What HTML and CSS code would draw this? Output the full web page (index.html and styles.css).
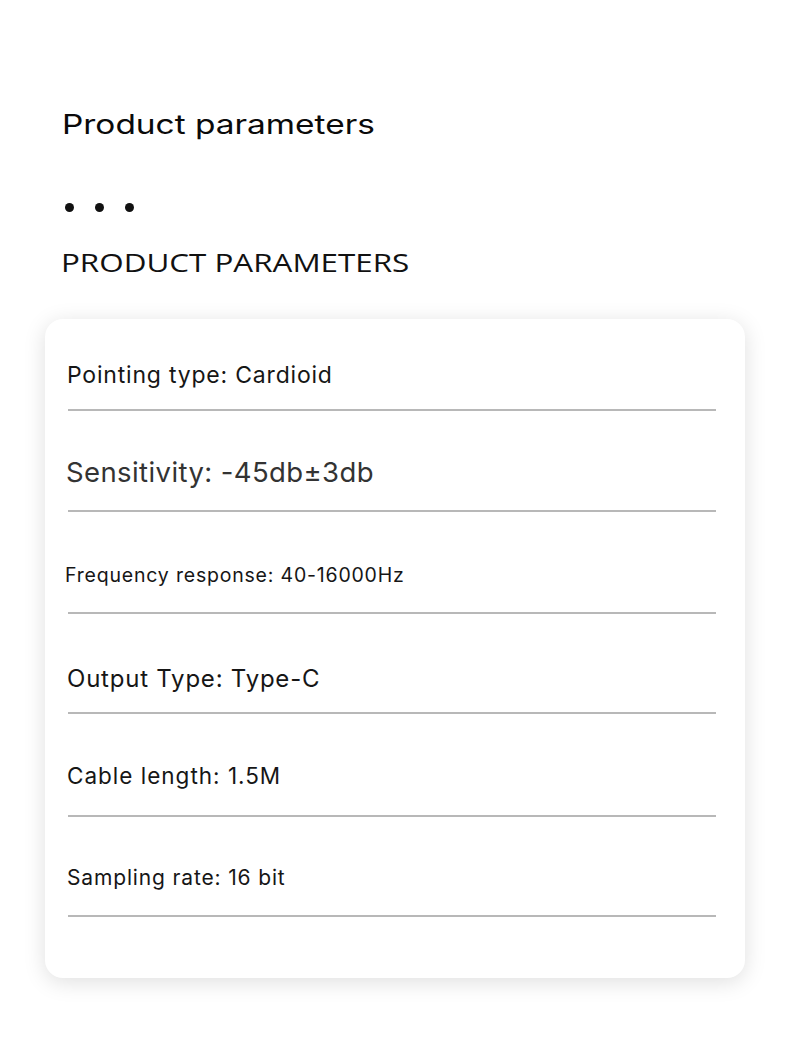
FILE: index.html
```html
<!DOCTYPE html>
<html>
<head>
<meta charset="utf-8">
<link rel="stylesheet" href="styles.css">
</head>
<body>
<div class="page">
  <h1 class="title"><span>Product parameters</span></h1>
  <div class="dots"><span></span><span></span><span></span></div>
  <h2 class="subtitle"><span>PRODUCT PARAMETERS</span></h2>
  <div class="card">
    <div class="row r1"><span>Pointing type: Cardioid</span></div>
    <div class="row r2"><span>Sensitivity: -45db±3db</span></div>
    <div class="row r3"><span>Frequency response: 40-16000Hz</span></div>
    <div class="row r4"><span>Output Type: Type-C</span></div>
    <div class="row r5"><span>Cable length: 1.5M</span></div>
    <div class="row r6"><span>Sampling rate: 16 bit</span></div>
  </div>
</div>
</body>
</html>
```

FILE: styles.css
```css
html, body {
  margin: 0;
  padding: 0;
  background: #ffffff;
}
body {
  font-family: "Inter", "Roboto", "Liberation Sans", sans-serif;
  color: #111;
  width: 790px;
  height: 1055px;
  overflow: hidden;
}
.page {
  padding: 106px 0 0 0;
}
.title {
  margin: 0 0 0 62px;
  font-size: 27px;
  font-weight: 400;
  line-height: 38px;
  color: #0a0a0a;
}
.title span,
.subtitle span {
  display: inline-block;
  transform-origin: left center;
}
.title span { transform: scaleX(1.237); }
.dots {
  display: flex;
  gap: 21px;
  margin: 59px 0 0 65px;
}
.dots span {
  width: 9px;
  height: 9px;
  border-radius: 50%;
  background: #111;
}
.subtitle {
  margin: 32px 0 0 61px;
  font-family: "Open Sans", "Noto Sans", sans-serif;
  font-size: 25px;
  font-weight: 400;
  line-height: 36px;
  color: #111;
}
.subtitle span { transform: scaleX(1.255); }
.card {
  margin: 39px 0 0 45px;
  width: 700px;
  height: 659px;
  box-sizing: border-box;
  background: #fff;
  border-radius: 18px;
  box-shadow: 0 4px 22px rgba(0, 0, 0, 0.13);
  padding: 0 29px 0 23px;
}
.row {
  display: flex;
  align-items: flex-end;
  box-sizing: border-box;
  border-bottom: 2px solid #b8b8b8;
  color: #161616;
}
.row span {
  display: block;
  line-height: 1.2;
}
.r1 { height: 92px; font-size: 23px; padding-bottom: 19px; letter-spacing: 0.8px; }
.r1 span { margin-left: -1px; }
.r2 { height: 101px; font-size: 27.5px; padding-bottom: 21px; letter-spacing: 0.4px; color: #333; }
.r2 span { margin-left: -2px; }
.r3 { height: 102px; font-size: 19.5px; padding-bottom: 25px; letter-spacing: 0.8px; }
.r3 span { margin-left: -3px; }
.r4 { height: 100px; font-size: 24px; padding-bottom: 18px; letter-spacing: 0.78px; }
.r4 span { margin-left: -1px; }
.r5 { height: 103px; font-size: 22.5px; padding-bottom: 26px; letter-spacing: 1px; }
.r5 span { margin-left: -1px; }
.r6 { height: 100px; font-size: 21px; padding-bottom: 25px; letter-spacing: 0.85px; }
.r6 span { margin-left: -1px; }
```
